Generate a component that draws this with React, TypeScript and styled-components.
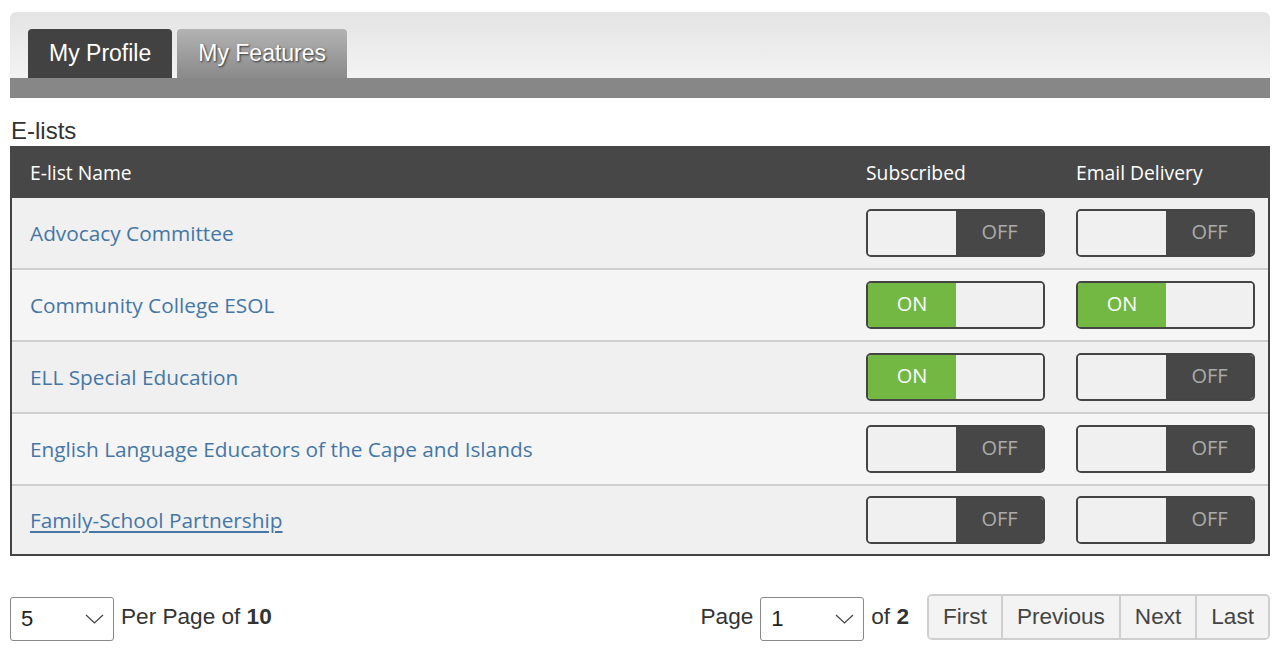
import styled, { createGlobalStyle } from "styled-components";

const GlobalStyle = createGlobalStyle`
    body {
        margin: 0;
        background: #ffffff;
        font-family: "Liberation Sans", Arial, sans-serif;
    }
`;

const Page = styled.div`
    width: 1260px;
    padding: 12px 11px 0 10px;
`;

const TabHeader = styled.div`
    background: linear-gradient(#e4e4e4, #f3f3f3);
    border-radius: 6px 6px 0 0;
    padding: 17px 18px 0;
    display: flex;
    gap: 5px;
    align-items: flex-end;
`;

const Tab = styled.div<{ $active?: boolean }>`
    height: 49px;
    padding: 0 21px;
    display: flex;
    align-items: center;
    font-size: 23px;
    color: #ffffff;
    border-radius: 4px 4px 0 0;
    background: ${(p) => (p.$active ? "#424242" : "linear-gradient(#b3b3b3, #8a8a8a)")};
    text-shadow: ${(p) => (p.$active ? "none" : "1px 1px 2px #333")};
`;

const TabBar = styled.div`
    height: 20px;
    background: #878787;
`;

const Title = styled.h2`
    margin: 0;
    padding: 20px 0 2px 1px;
    font-size: 24px;
    font-weight: normal;
    color: #333;
    line-height: 26px;
`;

const Table = styled.div`
    border: 2px solid #444;
    border-top: none;
    font-family: "Open Sans", sans-serif;
`;

const HeadRow = styled.div`
    display: grid;
    grid-template-columns: 1fr 210px 210px;
    height: 52px;
    align-items: center;
    background: #474747;
    color: #ffffff;
    font-size: 19.3px;
    margin: 0 -2px;

    & > span {
        padding-left: 16px;
    }
    & > span:first-child {
        padding-left: 20px;
    }
`;

const Row = styled.div<{ $alt?: boolean; $last?: boolean }>`
    display: grid;
    grid-template-columns: 1fr 210px 210px;
    height: ${(p) => (p.$last ? "68px" : "70px")};
    align-items: center;
    background: ${(p) => (p.$alt ? "#f5f5f5" : "#f0f0f0")};
    border-bottom: ${(p) => (p.$last ? "none" : "2px solid #cfcfcf")};
`;

const NameCell = styled.div`
    padding-left: 18px;
`;

const ListLink = styled.a<{ $underline?: boolean }>`
    color: #4577a6;
    font-size: 20.8px;
    text-decoration: ${(p) => (p.$underline ? "underline" : "none")};
    text-underline-offset: 3px;
    cursor: pointer;
`;

const ToggleCell = styled.div`
    padding-left: 18px;
`;

const Toggle = styled.div`
    width: 175px;
    height: 44px;
    border: 2px solid #444;
    border-radius: 5px;
    overflow: hidden;
    display: grid;
    grid-template-columns: 88px 1fr;
    background: #f0f0f0;
`;

const Half = styled.div<{ $kind: "on" | "off" | "blank" }>`
    display: flex;
    align-items: center;
    justify-content: center;
    font-size: 20px;
    background: ${(p) => (p.$kind === "on" ? "#73b842" : p.$kind === "off" ? "#474747" : "#f0f0f0")};
    color: ${(p) => (p.$kind === "on" ? "#ffffff" : "#ababab")};
    padding-bottom: 4px;
`;

const Footer = styled.div`
    display: flex;
    align-items: center;
    justify-content: space-between;
    margin-top: 37px;
    font-size: 22.6px;
    color: #333;
`;

const Group = styled.div`
    display: flex;
    align-items: center;
    gap: 7px;
`;

const SelectBox = styled.div`
    box-sizing: border-box;
    width: 104px;
    height: 44px;
    border: 1px solid #888;
    border-radius: 3px;
    display: flex;
    align-items: center;
    justify-content: space-between;
    padding: 0 9px 0 10px;
    font-size: 22px;
    color: #222;
    background: #fff;
    margin-top: 4px;
`;

const Buttons = styled.div`
    display: flex;
    border: 2px solid #cfcfcf;
    border-radius: 5px;
    overflow: hidden;
    margin-left: 11px;
    height: 46px;
    box-sizing: border-box;
`;

const PageButton = styled.button`
    border: none;
    border-left: 2px solid #cfcfcf;
    background: #f3f3f3;
    font-family: "Liberation Sans", Arial, sans-serif;
    font-size: 22.6px;
    color: #444;
    padding: 0 14px;
    cursor: pointer;
    &:first-child {
        border-left: none;
    }
`;

const lists = [
    { name: "Advocacy Committee", sub: false, mail: false },
    { name: "Community College ESOL", sub: true, mail: true },
    { name: "ELL Special Education", sub: true, mail: false },
    { name: "English Language Educators of the Cape and Islands", sub: false, mail: false },
    { name: "Family-School Partnership", sub: false, mail: false },
];

function Chevron() {
    return (
        <svg width="19" height="10" viewBox="0 0 19 10" fill="none">
            <polyline points="1,1 9.5,9 18,1" stroke="#444" strokeWidth="1.2" />
        </svg>
    );
}

function Switch(props: { on: boolean }) {
    return (
        <Toggle>
            {props.on ? (
                <>
                    <Half $kind="on">ON</Half>
                    <Half $kind="blank" />
                </>
            ) : (
                <>
                    <Half $kind="blank" />
                    <Half $kind="off">OFF</Half>
                </>
            )}
        </Toggle>
    );
}

export default function App() {
    return (
        <Page>
            <GlobalStyle />
            <TabHeader>
                <Tab $active>My Profile</Tab>
                <Tab>My Features</Tab>
            </TabHeader>
            <TabBar />
            <Title>E-lists</Title>
            <Table>
                <HeadRow>
                    <span>E-list Name</span>
                    <span>Subscribed</span>
                    <span>Email Delivery</span>
                </HeadRow>
                {lists.map((l, i) => (
                    <Row key={l.name} $alt={i % 2 == 1} $last={i == lists.length - 1}>
                        <NameCell>
                            <ListLink $underline={i == lists.length - 1}>{l.name}</ListLink>
                        </NameCell>
                        <ToggleCell>
                            <Switch on={l.sub} />
                        </ToggleCell>
                        <ToggleCell>
                            <Switch on={l.mail} />
                        </ToggleCell>
                    </Row>
                ))}
            </Table>
            <Footer>
                <Group>
                    <SelectBox>
                        <span>5</span>
                        <Chevron />
                    </SelectBox>
                    <span>
                        Per Page of <b>10</b>
                    </span>
                </Group>
                <Group>
                    <span>Page</span>
                    <SelectBox>
                        <span>1</span>
                        <Chevron />
                    </SelectBox>
                    <span>
                        of <b>2</b>
                    </span>
                    <Buttons>
                        <PageButton>First</PageButton>
                        <PageButton>Previous</PageButton>
                        <PageButton>Next</PageButton>
                        <PageButton>Last</PageButton>
                    </Buttons>
                </Group>
            </Footer>
        </Page>
    );
}
